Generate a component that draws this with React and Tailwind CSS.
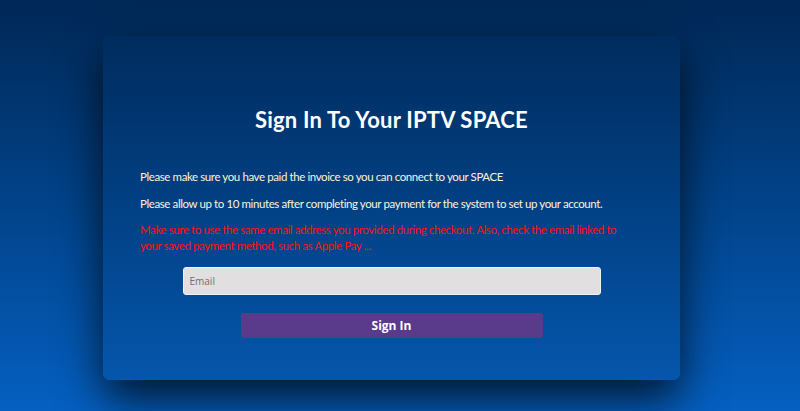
export default function App() {
  return (
    <div className="h-[411px] w-full overflow-hidden bg-gradient-to-b from-[#002856] to-[#0560c2] font-['Lato',sans-serif]">
      <div className="flex justify-center pt-[36px] pr-[17px]">
        <div className="w-[577px] h-[344px] rounded-[7px] bg-gradient-to-b from-[#002c5e] to-[#0556ad] shadow-[0_20px_45px_rgba(0,0,0,0.75)] px-[37px]">
          <h1 className="mt-[70px] text-center text-[22px] font-bold text-white leading-[28px] tracking-[0.2px]">
            Sign In To Your IPTV SPACE
          </h1>
          <p className="mt-[34px] text-[11.5px] leading-[18px] tracking-[-0.4px] text-[#fbf3dc]">
            Please make sure you have paid the invoice so you can connect to your SPACE
          </p>
          <p className="mt-[9px] text-[11.5px] leading-[18px] tracking-[-0.4px] text-[#fbf3dc]">
            Please allow up to 10 minutes after completing your payment for the system to set up your account.
          </p>
          <p className="mt-[9px] whitespace-nowrap text-[11.5px] leading-[16px] tracking-[-0.4px] text-[#ff1010]">
            Make sure to use the same email address you provided during checkout. Also, check the email linked to
            <br />
            your saved payment method, such as Apple Pay ...
          </p>
          <div className="mt-[13px] flex justify-center">
            <input
              type="email"
              placeholder="Email"
              className="w-[418px] h-[28px] rounded-[3px] border border-[#f2f2f2] bg-[#e1dfe0] px-[6px] text-[10px] font-['Open_Sans',sans-serif] text-[#333] placeholder:text-[#6e6e6e] outline-none"
            />
          </div>
          <div className="mt-[18px] flex justify-center">
            <button className="w-[302px] h-[25px] rounded-[3px] bg-[#5a3a8a] text-[12px] font-bold text-white font-['Open_Sans',sans-serif]">
              Sign In
            </button>
          </div>
        </div>
      </div>
    </div>
  );
}
